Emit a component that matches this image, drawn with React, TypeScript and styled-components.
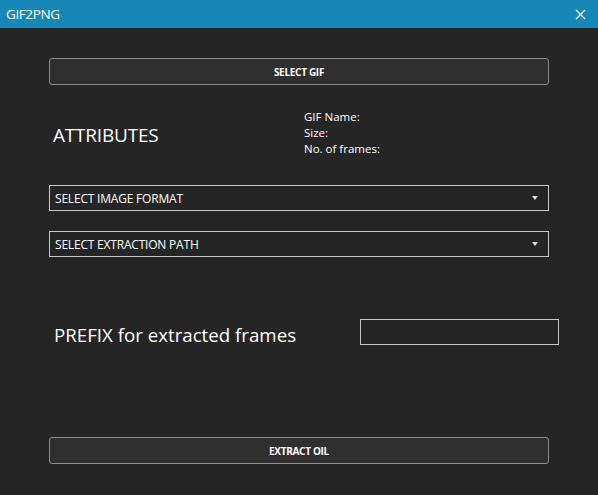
import React from 'react';
import styled, { createGlobalStyle } from 'styled-components';

const GlobalStyle = createGlobalStyle`
  html, body { margin: 0; padding: 0; background: #252525; }
  body { font-family: "Open Sans", "Noto Sans", sans-serif; }
`;

const App: React.FC = () => {
  return (
    <Window>
      <GlobalStyle />
      <TitleBar>
        <Title>GIF2PNG</Title>
        <CloseBtn width="11" height="11" viewBox="0 0 11 11">
          <path d="M1 1 L10 10 M10 1 L1 10" stroke="#e8f2f8" strokeWidth="1.4" />
        </CloseBtn>
      </TitleBar>
      <Body>
        <WideButton>SELECT GIF</WideButton>
        <AttrRow>
          <AttrTitle>ATTRIBUTES</AttrTitle>
          <InfoList>
            <InfoLine>GIF Name:</InfoLine>
            <InfoLine>Size:</InfoLine>
            <InfoLine>No. of frames:</InfoLine>
          </InfoList>
        </AttrRow>
        <Combo>
          <span>SELECT IMAGE FORMAT</span>
          <Arrow />
        </Combo>
        <Combo $gap={20}>
          <span>SELECT EXTRACTION PATH</span>
          <Arrow />
        </Combo>
        <PrefixRow>
          <PrefixLabel>PREFIX for extracted frames</PrefixLabel>
          <PrefixInput />
        </PrefixRow>
        <WideButton $top={90}>EXTRACT OIL</WideButton>
      </Body>
    </Window>
  );
};

export default App;

const Window = styled.div`
  width: 598px;
  height: 495px;
  background: #252525;
  color: #ffffff;
  overflow: hidden;
`;

const TitleBar = styled.div`
  height: 28px;
  background: #1787b8;
  display: flex;
  align-items: center;
  justify-content: space-between;
  padding: 0 12px 0 6px;
`;

const Title = styled.span`
  font-family: "Open Sans", sans-serif;
  font-size: 13.5px;
  letter-spacing: -0.4px;
  color: #ffffff;
`;

const CloseBtn = styled.svg`
  display: block;
`;

const Body = styled.div`
  display: flex;
  flex-direction: column;
  padding: 30px 49px 0 49px;
`;

const WideButton = styled.div<{ $top?: number }>`
  margin-top: ${p => p.$top ?? 0}px;
  height: 27px;
  box-sizing: border-box;
  border: 1px solid #8c8c8c;
  border-radius: 3px;
  background: #2f2f2f;
  display: flex;
  align-items: center;
  justify-content: center;
  font-size: 10px;
  font-weight: 700;
  letter-spacing: -0.3px;
`;

const AttrRow = styled.div`
  display: flex;
  align-items: center;
  height: 100px;
`;

const AttrTitle = styled.div`
  width: 251px;
  padding-left: 4px;
  font-size: 19px;
  letter-spacing: -0.2px;
`;

const InfoList = styled.div`
  display: flex;
  flex-direction: column;
  margin-top: -4px;
`;

const InfoLine = styled.div`
  font-size: 11.5px;
  line-height: 16px;
`;

const Combo = styled.div<{ $gap?: number }>`
  margin-top: ${p => p.$gap ?? 0}px;
  height: 26px;
  box-sizing: border-box;
  border: 1px solid #c8c8c8;
  display: flex;
  align-items: center;
  justify-content: space-between;
  padding: 0 10px 0 5px;
  font-size: 12px;
  letter-spacing: -0.2px;
`;

const Arrow = styled.span`
  width: 0;
  height: 0;
  border-left: 3px solid transparent;
  border-right: 3px solid transparent;
  border-top: 4px solid #e0e0e0;
`;

const PrefixRow = styled.div`
  display: flex;
  align-items: center;
  justify-content: space-between;
  margin-top: 60px;
  margin-right: -10px;
`;

const PrefixLabel = styled.div`
  margin-top: 5px;
  padding-left: 5px;
  font-size: 18.7px;
`;

const PrefixInput = styled.div`
  width: 199px;
  height: 26px;
  box-sizing: border-box;
  border: 1px solid #c8c8c8;
`;
